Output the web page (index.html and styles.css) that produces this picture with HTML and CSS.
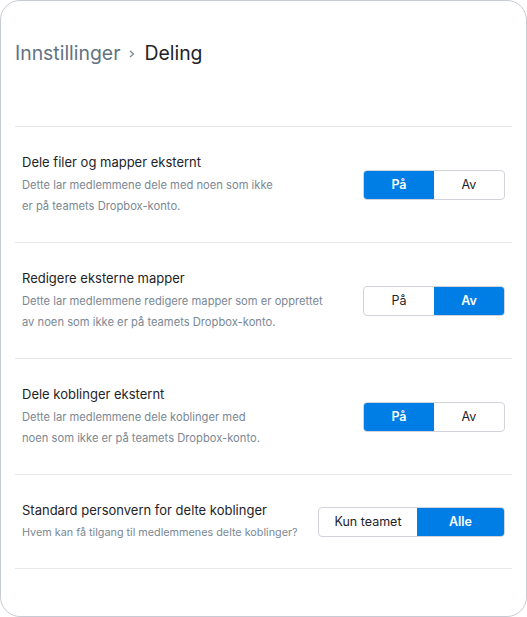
FILE: index.html
```
<!DOCTYPE html>
<html lang="no">
<head>
<meta charset="utf-8">
<title>Deling</title>
<link rel="stylesheet" href="styles.css">
</head>
<body>
<div class="card">
  <h1 class="crumbs"><span class="parent">Innstillinger</span><svg class="chev" width="8" height="10" viewBox="0 0 8 10"><path d="M2 2 L5.5 5 L2 8" fill="none" stroke="#7b8894" stroke-width="1.3"/></svg><span class="current">Deling</span></h1>
  <div class="list">
    <div class="row">
      <div class="text">
        <div class="title">Dele filer og mapper eksternt</div>
        <div class="desc">Dette lar medlemmene dele med noen som ikke<br>er på teamets Dropbox-konto.</div>
      </div>
      <div class="seg"><span class="opt on">På</span><span class="opt">Av</span></div>
    </div>
    <div class="row">
      <div class="text">
        <div class="title">Redigere eksterne mapper</div>
        <div class="desc">Dette lar medlemmene redigere mapper som er opprettet<br>av noen som ikke er på teamets Dropbox-konto.</div>
      </div>
      <div class="seg"><span class="opt">På</span><span class="opt on">Av</span></div>
    </div>
    <div class="row">
      <div class="text">
        <div class="title">Dele koblinger eksternt</div>
        <div class="desc">Dette lar medlemmene dele koblinger med<br>noen som ikke er på teamets Dropbox-konto.</div>
      </div>
      <div class="seg"><span class="opt on">På</span><span class="opt">Av</span></div>
    </div>
    <div class="row">
      <div class="text">
        <div class="title">Standard personvern for delte koblinger</div>
        <div class="desc">Hvem kan få tilgang til medlemmenes delte koblinger?</div>
      </div>
      <div class="seg wide"><span class="opt team">Kun teamet</span><span class="opt all on">Alle</span></div>
    </div>
  </div>
</div>
</body>
</html>
```
FILE: styles.css
```
html, body { margin: 0; padding: 0; background: #fff; }
body { font-family: "Inter", "Liberation Sans", sans-serif; color: #1e2329; }
.card {
  width: 527px;
  height: 617px;
  border: 1px solid #c7ccd4;
  border-radius: 20px;
  padding: 0 14px 0 14px;
  box-sizing: border-box;
}
.crumbs {
  margin: 0;
  padding-top: 40px;
  height: 85px;
  font-size: 19.4px;
  font-weight: 400;
  line-height: 24px;
  display: flex;
  align-items: flex-start;
}
.parent { color: #637282; }
.chev { margin: 8px 8px 0 8px; }
.current { color: #1e2329; }
.list { border-top: 1px solid #e6e8eb; }
.row {
  display: flex;
  align-items: center;
  justify-content: space-between;
  padding: 25px 7px 25px 7px;
  border-bottom: 1px solid #e6e8eb;
}
.title { font-size: 13px; line-height: 20px; color: #1e2329; margin-bottom: 3px; }
.desc { font-size: 11.2px; line-height: 21px; color: #7b8894; }
.row:last-child .desc { line-height: 20px; font-size: 10.8px; }
.seg {
  display: flex;
  height: 30px;
  border: 1px solid #d0d4da;
  border-radius: 4px;
  overflow: hidden;
  box-sizing: border-box;
}
.opt {
  width: 70px;
  display: flex;
  align-items: center;
  justify-content: center;
  font-size: 12.5px;
  color: #1e2329;
}
.opt.on { background: #007ee5; color: #fff; font-weight: 600; }
.seg .opt.team { width: 98px; }
.seg .opt.all { width: 87px; }
```
